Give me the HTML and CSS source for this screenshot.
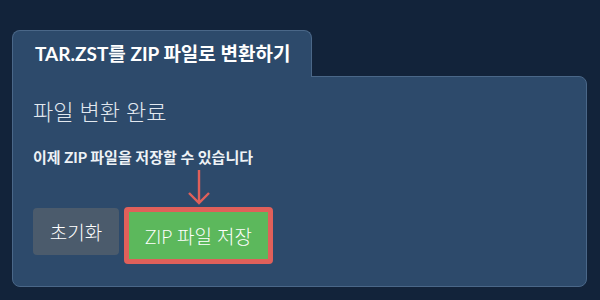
FILE: index.html
```html
<!DOCTYPE html>
<html lang="ko">
<head>
  <meta charset="UTF-8" />
  <meta name="viewport" content="width=device-width, initial-scale=1.0" />
  <title>TAR.ZST를 ZIP 파일로 변환하기</title>
  <link rel="stylesheet" href="styles.css">
</head>
<body>
<div class="converter">
  <!-- 탭 제목 -->
  <div class="converter__tab">TAR.ZST를 ZIP 파일로 변환하기</div>
  <div class="converter__panel">
    <h2 class="done-title">파일 변환 완료</h2>
    <p class="done-text">이제 ZIP 파일을 저장할 수 있습니다</p>
    <div class="actions">
      <button class="btn btn--reset">초기화</button>
      <div class="save-wrap">
        <!-- 강조 화살표 -->
        <svg class="save-arrow" width="24" height="36" viewBox="0 0 24 36">
          <path d="M12 1 V34 M2 24 L12 34 L22 24" fill="none" stroke="#e0605a" stroke-width="2.4" />
        </svg>
        <button class="btn btn--save">ZIP 파일 저장</button>
      </div>
    </div>
  </div>
</div>
</body>
</html>
```

FILE: styles.css
```css
body {
  margin: 0;
  background: #12233a;
  font-family: Lato, "Noto Sans CJK KR", sans-serif;
  color: #fff;
}

.converter {
  padding: 30px 13px 14px 12px;
}

.converter__tab {
  position: relative;
  z-index: 1;
  display: inline-block;
  box-sizing: border-box;
  width: 300px;
  height: 47px;
  margin-bottom: -1px;
  padding: 11px 0 0 22px;
  background: #2d4a6b;
  border: 1px solid #4a6788;
  border-bottom: none;
  border-radius: 8px 8px 0 0;
  font-size: 19px;
  font-weight: 700;
  line-height: 24px;
}

.converter__panel {
  box-sizing: border-box;
  height: 211px;
  padding: 20px 20px 0;
  background: #2d4a6b;
  border: 1px solid #4a6788;
  border-radius: 0 8px 8px 8px;
}

.done-title {
  margin: 0;
  font-size: 22px;
  font-weight: 300;
  line-height: 30px;
  color: #e2e8ef;
}

.done-text {
  margin: 20px 0 0;
  font-size: 15px;
  font-weight: 700;
  line-height: 20px;
  color: #eef2f6;
}

.actions {
  display: flex;
  align-items: flex-start;
  gap: 5px;
  margin-top: 40px;
}

.btn {
  box-sizing: border-box;
  height: 47px;
  border: none;
  border-radius: 4px;
  font-family: Lato, "Noto Sans CJK KR", sans-serif;
  font-weight: 300;
  color: #fff;
  cursor: pointer;
}

.btn--reset {
  width: 86px;
  margin-top: 1px;
  background: #4b5b6c;
  font-size: 19px;
}

.save-wrap {
  position: relative;
}

.save-arrow {
  position: absolute;
  left: 50%;
  bottom: 100%;
  margin-left: -12px;
  margin-bottom: 2px;
}

.btn--save {
  width: 149px;
  height: 57px;
  background: #5cb85c;
  border: 5px solid #e0605a;
  font-size: 19px;
}
```
